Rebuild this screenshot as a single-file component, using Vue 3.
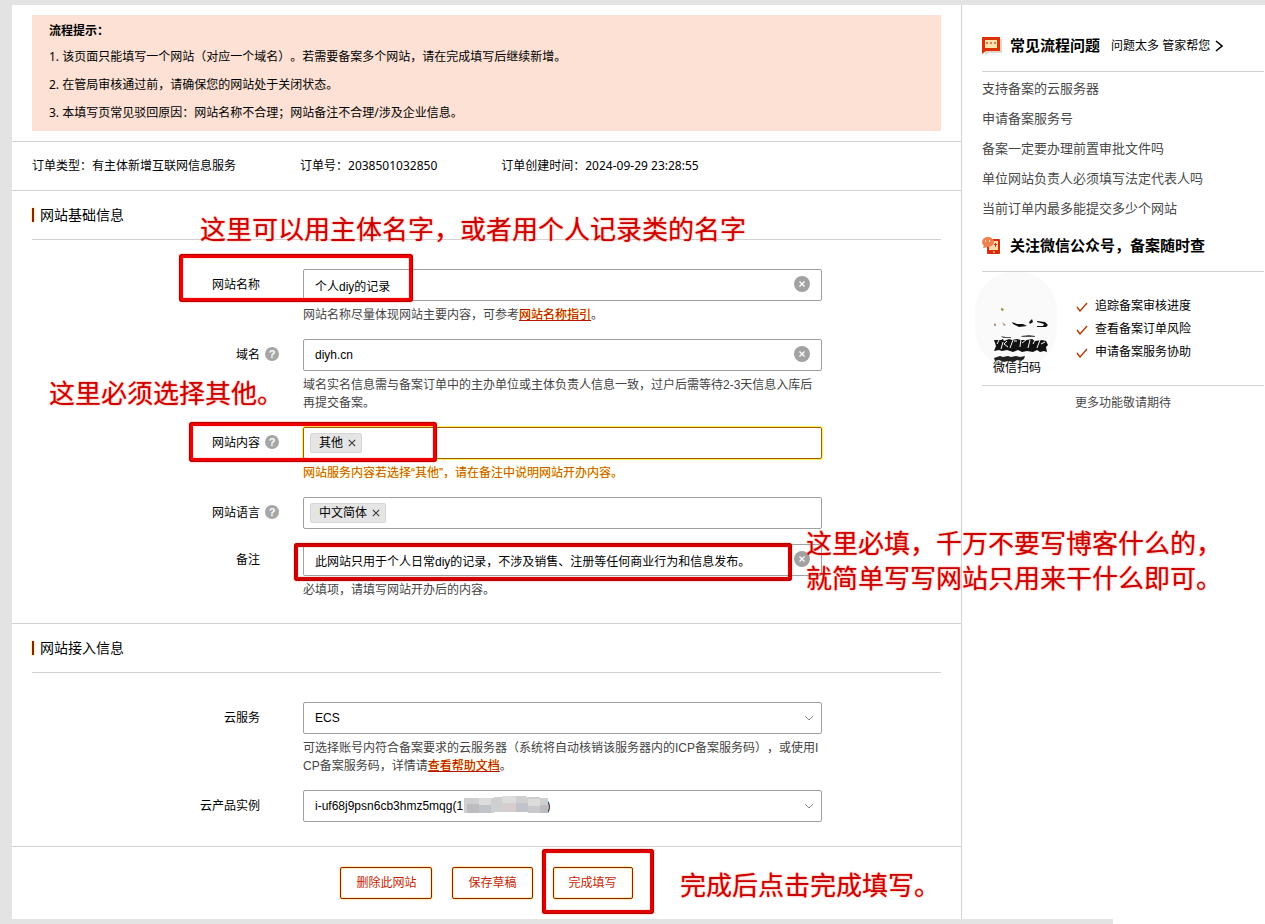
<script setup>
import { ref } from 'vue'

const siteName = ref('个人diy的记录')
const domain = ref('diyh.cn')
const remark = ref('此网站只用于个人日常diy的记录，不涉及销售、注册等任何商业行为和信息发布。')
const contents = ref(['其他'])
const languages = ref(['中文简体'])
const service = ref('ECS')
const instance = ref('i-uf68j9psn6cb3hmz5mqg(1' + '\u00a0'.repeat(25) + ')')

const tips = [
  '1. 该页面只能填写一个网站（对应一个域名）。若需要备案多个网站，请在完成填写后继续新增。',
  '2. 在管局审核通过前，请确保您的网站处于关闭状态。',
  '3. 本填写页常见驳回原因：网站名称不合理；网站备注不合理/涉及企业信息。',
]
const questions = [
  '支持备案的云服务器',
  '申请备案服务号',
  '备案一定要办理前置审批文件吗',
  '单位网站负责人必须填写法定代表人吗',
  '当前订单内最多能提交多少个网站',
]
const features = ['追踪备案审核进度', '查看备案订单风险', '申请备案服务协助']
</script>

<template>
  <div class="page">
    <div class="layout">
      <main class="main">
        <section class="notice">
          <h2>流程提示：</h2>
          <p v-for="tip in tips" :key="tip">{{ tip }}</p>
        </section>

        <div class="order">
          <span>订单类型：有主体新增互联网信息服务</span>
          <span>订单号：2038501032850</span>
          <span>订单创建时间：2024-09-29 23:28:55</span>
        </div>

        <section class="section">
          <h3>网站基础信息</h3>
          <div class="row">
            <label class="name" for="site-name">网站名称</label>
            <div class="field">
              <div class="control">
                <input id="site-name" v-model="siteName" type="text" />
                <button class="clear" type="button" aria-label="清空网站名称" @click="siteName = ''">
                  <svg viewBox="0 0 16 16"><circle cx="8" cy="8" r="8" /><path d="M5.5 5.5l5 5m0-5l-5 5" /></svg>
                </button>
              </div>
              <p class="hint">网站名称尽量体现网站主要内容，可参考<a href="#guide">网站名称指引</a>。</p>
            </div>
          </div>
          <div class="row">
            <label class="name" for="domain">域名</label>
            <button class="help" type="button" aria-label="域名说明">?</button>
            <div class="field">
              <div class="control">
                <input id="domain" v-model="domain" type="text" />
                <button class="clear" type="button" aria-label="清空域名" @click="domain = ''">
                  <svg viewBox="0 0 16 16"><circle cx="8" cy="8" r="8" /><path d="M5.5 5.5l5 5m0-5l-5 5" /></svg>
                </button>
              </div>
              <p class="hint">域名实名信息需与备案订单中的主办单位或主体负责人信息一致，过户后需等待2-3天信息入库后再提交备案。</p>
            </div>
          </div>
          <div class="row">
            <span class="name">网站内容</span>
            <button class="help" type="button" aria-label="网站内容说明">?</button>
            <div class="field">
              <div class="tags active">
                <span v-for="(tag, i) in contents" :key="tag" class="tag">
                  {{ tag }}
                  <button type="button" :aria-label="'移除' + tag" @click="contents.splice(i, 1)">
                    <svg viewBox="0 0 10 10"><path d="M1 1l8 8m0-8l-8 8" /></svg>
                  </button>
                </span>
              </div>
              <p class="hint warn">网站服务内容若选择“其他”，请在备注中说明网站开办内容。</p>
            </div>
          </div>
          <div class="row">
            <span class="name">网站语言</span>
            <button class="help" type="button" aria-label="网站语言说明">?</button>
            <div class="field">
              <div class="tags">
                <span v-for="(tag, i) in languages" :key="tag" class="tag">
                  {{ tag }}
                  <button type="button" :aria-label="'移除' + tag" @click="languages.splice(i, 1)">
                    <svg viewBox="0 0 10 10"><path d="M1 1l8 8m0-8l-8 8" /></svg>
                  </button>
                </span>
              </div>
            </div>
          </div>
          <div class="row">
            <label class="name" for="remark">备注</label>
            <div class="field">
              <div class="control">
                <input id="remark" v-model="remark" type="text" />
                <button class="clear" type="button" aria-label="清空备注" @click="remark = ''">
                  <svg viewBox="0 0 16 16"><circle cx="8" cy="8" r="8" /><path d="M5.5 5.5l5 5m0-5l-5 5" /></svg>
                </button>
              </div>
              <p class="hint">必填项，请填写网站开办后的内容。</p>
            </div>
          </div>
        </section>

        <section class="section">
          <h3>网站接入信息</h3>
          <div class="row">
            <label class="name" for="service">云服务</label>
            <div class="field">
              <div class="control">
                <select id="service" v-model="service"><option>ECS</option></select>
                <svg class="chevron" viewBox="0 0 10 6"><path d="M1 1l4 4 4-4" /></svg>
              </div>
              <p class="hint break">可选择账号内符合备案要求的云服务器（系统将自动核销该服务器内的ICP备案服务码），或使用ICP备案服务码，详情请<a href="#help">查看帮助文档</a>。</p>
            </div>
          </div>
          <div class="row">
            <label class="name" for="instance">云产品实例</label>
            <div class="field">
              <div class="control">
                <select id="instance" v-model="instance"><option :value="instance">{{ instance }}</option></select>
                <svg class="mosaic" viewBox="0 0 86 18">
                  <path fill="#cfcfd0" d="M0 2h30V1h12V0h20v1h14v1h8v15H64v-1H30v1H0z" />
                  <path fill="#bdbdbf" d="M3 8h12v9H3zM76 9h8v8h-8z" />
                  <path fill="#dddcdd" d="M15 2h12v7H15zM38 0h14v7H38zM64 3h12v7H64z" />
                  <path fill="#d5cecd" d="M40 7h12v8H40z" />
                  <path fill="#c0c3ca" d="M15 9h12v8H15zM52 7h12v9H52z" />
                  <path fill="#c8c9cc" d="M64 10h12v7H64z" />
                </svg>
                <svg class="chevron" viewBox="0 0 10 6"><path d="M1 1l4 4 4-4" /></svg>
              </div>
            </div>
          </div>
        </section>

        <footer class="actions">
          <button type="button">删除此网站</button>
          <button type="button">保存草稿</button>
          <button type="button">完成填写</button>
        </footer>
      </main>

      <aside class="side">
        <header class="side-head">
          <svg class="side-icon" viewBox="0 0 20 20">
            <path fill="#e6d8c8" d="M3 3h17v14H7l-4 2z" />
            <path fill="#dc3208" d="M0 1h18v14H4l-4 3z" />
            <path fill="#ffe3ae" d="M3 4h12v8H3z" />
            <path fill="#e4764a" d="M4 6h2v2H4zm4 0h2v2H8zm4 0h2v2h-2z" />
          </svg>
          <h2>常见流程问题</h2>
          <a href="#butler">问题太多 管家帮您<svg viewBox="0 0 8 12"><path d="M1 1l6 5-6 5" /></svg></a>
        </header>
        <ul class="questions">
          <li v-for="q in questions" :key="q"><a href="#question">{{ q }}</a></li>
        </ul>

        <header class="side-head">
          <svg class="side-icon" viewBox="0 0 20 20">
            <rect x="5" y="3" width="13" height="15" rx="1" fill="#d92d09" />
            <path fill="#ffdcae" d="M7 5h9v9H7z" />
            <path fill="#dc3208" d="M12 8h1V7h1v1h1v1h-1v2h-1V9h-1z" />
            <circle cx="12" cy="16" r="1" fill="#ffb48d" />
            <ellipse cx="6" cy="6" rx="6" ry="5" fill="#ee8150" />
            <path fill="#ee8150" d="M2 9l-1 3 5-1z" />
            <path fill="#ffe0bc" d="M3 4h1v2H3zm4 0h1v2H7z" />
          </svg>
          <h2>关注微信公众号，备案随时查</h2>
        </header>
        <div class="wechat">
          <figure>
            <svg viewBox="0 0 84 98">
              <rect x="1" y="0" width="82" height="96" rx="38" fill="#fafafa" />
              <path fill="#a08a4a" d="M27 36l3 1-1 2-2-1z" />
              <path fill="#b59a80" d="M20 51l2 1v2h-2zm8-1l4 3-2 1z" />
              <path fill="#111" d="M38 50l5 2 6 0 4 2-8 1-6-3zm17 0l3-3 1 3-3 2zm8-1l8 1 3 3-2 2-9 0 0-1 6 0 1-2-7-2z" />
              <path fill="#555" d="M27 64l5 1 5 0v1h-8zm20 0l8-1 6 1v1H48z" />
              <path fill="#111" d="M20 68h7l2-1 1 2 5-2 3 1 5-1 4 1h6l5-1 3 2 7-1 4 1 2 4-2 2 1 5-3-1-4 1-3-2-4 2-6-1-5 1-4-2-5 2-6-2-5 1-3-1-5 1 2-5z" />
              <path fill="none" stroke="#fafafa" stroke-width="1" d="M25 68l-2 4m6-2l-2 7m6-8l-3 3 4 3m5-7l-3 8m7-7h-3m7-2l-1 8m6-7l-4 3m8-3l-2 8m7-8l-2 4m7-4l-3 8m8-6l-4 2" />
              <path fill="#222" d="M20 86l6-2 3 1 5-1 3 1 5-1 4 1 5-1-1 3-3 2-4-1-3 2-6-1-4 1-5-2-4 1z" />
            </svg>
            <figcaption>微信扫码</figcaption>
          </figure>
          <ul>
            <li v-for="f in features" :key="f">
              <svg viewBox="0 0 12 10"><path d="M1 5l3 4 7-8" /></svg>{{ f }}
            </li>
          </ul>
        </div>
        <p class="more">更多功能敬请期待</p>
      </aside>
    </div>
    <div class="edge"></div>

    <div class="marks">
      <i class="box box-name"></i>
      <i class="box box-content"></i>
      <i class="box box-remark"></i>
      <i class="box box-submit"></i>
      <p class="note note-name">这里可以用主体名字，或者用个人记录类的名字</p>
      <p class="note note-content">这里必须选择其他。</p>
      <p class="note note-remark">这里必填，千万不要写博客什么的，<br />就简单写写网站只用来干什么即可。</p>
      <p class="note note-submit">完成后点击完成填写。</p>
    </div>
  </div>
</template>

<style>
body {
  margin: 0;
  background: #fff;
}
</style>

<style scoped>
* {
  box-sizing: border-box;
}
h2,
h3,
p,
ul,
figure {
  margin: 0;
  padding: 0;
}
ul {
  list-style: none;
}
button,
input,
select {
  font: inherit;
  color: inherit;
}
button {
  padding: 0;
  border: 0;
  background: none;
  cursor: pointer;
}
svg {
  display: block;
}
.page {
  position: relative;
  overflow: hidden;
  padding: 5px 0 0 12px;
  background: #e3e3e3;
  color: #000;
  font: 12px/18px "Liberation Sans", "Noto Sans CJK SC", sans-serif;
  text-spacing-trim: space-all;
}
.layout {
  display: grid;
  grid-template-columns: minmax(0, 1fr) 304px;
  background: #fff;
}
.edge {
  width: 152px;
  height: 5px;
  margin-left: auto;
  background: #fff;
}
.main {
  padding-top: 10px;
}
.notice {
  margin: 0 20px 10px;
  padding: 4px 17px;
  background: #fce1d4;
  font-family: "Noto Sans", "Noto Sans CJK SC", sans-serif;
}
.notice h2 {
  font-size: 12px;
  line-height: 24px;
}
.notice p {
  line-height: 28px;
}
.order {
  display: flex;
  gap: 64px;
  padding: 0 20px;
  border-top: 1px solid #d2d2d2;
  border-bottom: 1px solid #d2d2d2;
  line-height: 48px;
  font-family: "Noto Sans", "Noto Sans CJK SC", sans-serif;
}
.section {
  padding: 0 20px 9px;
  border-bottom: 1px solid #d2d2d2;
}
.section h3 {
  display: flex;
  align-items: center;
  gap: 6px;
  height: 49px;
  margin-bottom: 29px;
  border-bottom: 1px solid #d2d2d2;
  font-size: 14px;
  font-weight: 400;
}
.section h3::before {
  content: "";
  width: 2px;
  height: 14px;
  background: #8c2400;
  box-shadow: 0 0 2px #ffb400;
}
.row {
  display: grid;
  grid-template-columns: 228px 43px minmax(0, 1fr);
  margin: 0 119px 15px 0;
}
.name {
  line-height: 32px;
  text-align: right;
}
.help {
  width: 14px;
  height: 14px;
  margin: 8px 0 0 5px;
  border-radius: 50%;
  background: #a6a6a6;
  color: #fff;
  font-size: 11px;
  font-weight: 700;
  line-height: 14px;
}
.field {
  grid-column: 3;
}
.control {
  position: relative;
}
.control input,
.control select,
.tags {
  display: block;
  width: 100%;
  height: 32px;
  margin: 0;
  border: 1px solid #a0a0a0;
  border-radius: 2px;
  background: #fff;
  outline: 0;
}
.control input,
.control select {
  padding: 0 36px 0 11px;
  line-height: 30px;
  appearance: none;
}
.clear {
  position: absolute;
  top: 7px;
  right: 12px;
  width: 16px;
  height: 16px;
}
.clear circle {
  fill: #a2a2a2;
}
.clear path,
.chevron path {
  fill: none;
  stroke: #fff;
  stroke-width: 1.3;
}
.chevron {
  position: absolute;
  top: 13px;
  right: 8px;
  width: 10px;
  height: 6px;
  pointer-events: none;
}
.chevron path {
  stroke: #888;
  stroke-width: 1;
}
.mosaic {
  position: absolute;
  top: 6px;
  left: 161px;
  width: 86px;
  height: 18px;
  pointer-events: none;
}
.tags {
  display: flex;
  align-items: center;
  padding: 0 6px;
}
.tags.active {
  border-color: #a35a00;
  box-shadow: 0 0 1px 1px #fff04a;
}
.tag {
  display: flex;
  align-items: center;
  gap: 5px;
  height: 20px;
  padding: 0 5px 0 8px;
  border: 1px solid #d6d6d6;
  border-radius: 2px;
  background: #e5e5e5;
}
.tag svg {
  width: 8px;
  height: 8px;
}
.tag path {
  fill: none;
  stroke: #333;
  stroke-width: 1.3;
}
.hint {
  margin-top: 5px;
  color: #444;
}
.hint.break {
  word-break: break-all;
}
.hint.warn {
  color: #c85a00;
  text-shadow: 0 0 1px #ffe84a;
}
.hint a {
  color: #b81400;
  text-shadow: 0 0 1px #ffb400;
}
.actions {
  display: flex;
  justify-content: center;
  gap: 20px;
  padding: 20px 0;
}
.actions button {
  height: 32px;
  padding: 0 15px;
  border: 1px solid #8c2400;
  border-radius: 2px;
  box-shadow: 0 0 2px #ffb400, inset 0 0 2px #ffb400;
  color: #c81e00;
}
.side {
  padding: 19px 1px 0 20px;
  border-left: 1px solid #d2d2d2;
}
.side-head {
  display: flex;
  align-items: center;
  height: 48px;
  padding-bottom: 3px;
  border-bottom: 1px solid #d2d2d2;
}
.side-icon {
  width: 20px;
  height: 20px;
  margin-right: 8px;
}
.side-head h2 {
  font-size: 15px;
  line-height: 24px;
}
.side-head a {
  display: flex;
  align-items: center;
  gap: 5px;
  margin-left: 11px;
  color: #000;
  text-decoration: none;
}
.side-head a svg {
  width: 8px;
  height: 12px;
}
.side-head a path {
  fill: none;
  stroke: #000;
  stroke-width: 1.6;
}
.questions {
  padding: 2px 0 0;
  font-size: 13px;
  line-height: 30px;
}
.questions a {
  color: #484848;
  text-decoration: none;
}
.wechat {
  display: flex;
  height: 114px;
  border-bottom: 1px solid #d2d2d2;
}
.wechat figure {
  position: relative;
  width: 84px;
  margin-left: -8px;
}
.wechat figure svg {
  width: 84px;
  height: 98px;
}
.wechat figcaption {
  position: absolute;
  top: 87px;
  left: 19px;
}
.wechat ul {
  padding: 23px 0 0 18px;
  line-height: 23px;
}
.wechat li {
  display: flex;
  align-items: center;
  gap: 7px;
}
.wechat li svg {
  width: 12px;
  height: 10px;
}
.wechat li path {
  fill: none;
  stroke: #b83a00;
  stroke-width: 1.4;
}
.more {
  padding-top: 8px;
  color: #484848;
  text-align: center;
}
.marks {
  position: absolute;
  inset: 0;
  pointer-events: none;
}
.box {
  position: absolute;
  border: 4px solid #f00000;
  border-radius: 3px;
  box-shadow: 0 0 2px #ff8a7a, inset 0 0 1px #a00000;
  outline: 1px solid #b40000;
  outline-offset: -1px;
}
.box-name {
  left: 179px;
  top: 254px;
  width: 234px;
  height: 48px;
}
.box-content {
  left: 189px;
  top: 422px;
  width: 248px;
  height: 40px;
}
.box-remark {
  left: 294px;
  top: 543px;
  width: 498px;
  height: 38px;
  border-color: #d40000;
}
.box-submit {
  left: 542px;
  top: 849px;
  width: 112px;
  height: 65px;
  border-color: #e00000;
}
.note {
  position: absolute;
  color: #cc0000;
  font-size: 26px;
  line-height: 35px;
  white-space: nowrap;
  text-shadow: 0 0 2px #ff7a6a;
}
.note-name {
  left: 200px;
  top: 213px;
}
.note-content {
  left: 49px;
  top: 377px;
}
.note-remark {
  left: 806px;
  top: 527px;
}
.note-submit {
  left: 680px;
  top: 869px;
}
</style>
